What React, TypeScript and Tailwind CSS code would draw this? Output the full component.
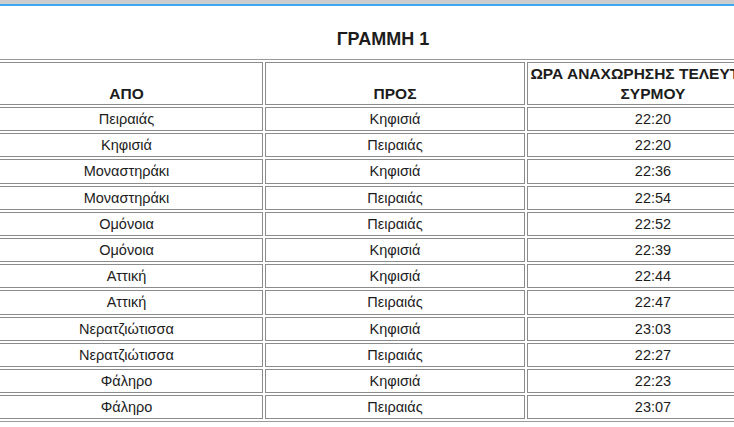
const rows: [string, string, string][] = [
  ['Πειραιάς', 'Κηφισιά', '22:20'],
  ['Κηφισιά', 'Πειραιάς', '22:20'],
  ['Μοναστηράκι', 'Κηφισιά', '22:36'],
  ['Μοναστηράκι', 'Πειραιάς', '22:54'],
  ['Ομόνοια', 'Πειραιάς', '22:52'],
  ['Ομόνοια', 'Κηφισιά', '22:39'],
  ['Αττική', 'Κηφισιά', '22:44'],
  ['Αττική', 'Πειραιάς', '22:47'],
  ['Νερατζιώτισσα', 'Κηφισιά', '23:03'],
  ['Νερατζιώτισσα', 'Πειραιάς', '22:27'],
  ['Φάληρο', 'Κηφισιά', '22:23'],
  ['Φάληρο', 'Πειραιάς', '23:07'],
];

const th =
  'border border-[#8c8c8c] px-px py-px align-bottom text-center font-bold text-[15.5px] leading-[19.5px]';
const td = 'border border-[#8c8c8c] px-px py-px text-center leading-[20.2px]';

export default function App() {
  return (
    <div className="w-[734px] h-[427px] overflow-hidden bg-white text-[#1c1c1c] font-['Liberation_Sans',Arial,sans-serif]">
      {/* browser chrome strip */}
      <div className="h-[4px] bg-[#cdcdcd]" />
      <div className="h-[2px] bg-[#3ea6f2]" />

      <h2 className="w-[766px] text-center text-[18px] font-bold leading-[20px] pt-[23px] pb-[10px]">
        ΓΡΑΜΜΗ 1
      </h2>

      <table
        className="ml-[-13px] table-fixed border border-[#9a9a9a] border-separate border-spacing-[2px] text-[14.5px]"
        style={{ width: 795 }}
      >
        <colgroup>
          <col style={{ width: 273 }} />
          <col style={{ width: 260 }} />
          <col style={{ width: 252 }} />
        </colgroup>
        <thead>
          <tr>
            <th className={th}>ΑΠΟ</th>
            <th className={th}>ΠΡΟΣ</th>
            <th className={th}>ΩΡΑ ΑΝΑΧΩΡΗΣΗΣ ΤΕΛΕΥΤΑΙΟΥ ΣΥΡΜΟΥ</th>
          </tr>
        </thead>
        <tbody>
          {rows.map((r, i) => (
            <tr key={i}>
              <td className={td}>{r[0]}</td>
              <td className={td}>{r[1]}</td>
              <td className={td}>{r[2]}</td>
            </tr>
          ))}
        </tbody>
      </table>
    </div>
  );
}
